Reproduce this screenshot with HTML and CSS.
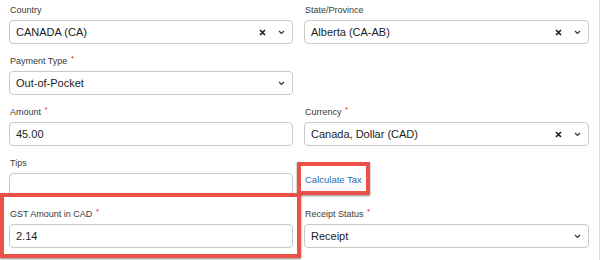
FILE: index.html
```html
<!DOCTYPE html>
<html lang="en">
<head>
    <meta charset="UTF-8">
    <meta name="viewport" content="width=device-width, initial-scale=1.0">
    <title>Expense Details</title>
    <link rel="stylesheet" href="styles.css">
</head>
<body>
    <div class="page">
        <form class="expense-form">
            <div class="field">
                <label class="field-label">Country</label>
                <div class="select">
                    <span class="select-value">CANADA (CA)</span>
                    <svg class="icon-clear" viewBox="0 0 7 7"><path d="M1 1L6 6M6 1L1 6"/></svg>
                    <svg class="icon-chevron" viewBox="0 0 7 5"><path d="M1 1L3.5 3.5L6 1"/></svg>
                </div>
            </div>
            <div class="field">
                <label class="field-label">State/Province</label>
                <div class="select">
                    <span class="select-value">Alberta (CA-AB)</span>
                    <svg class="icon-clear" viewBox="0 0 7 7"><path d="M1 1L6 6M6 1L1 6"/></svg>
                    <svg class="icon-chevron" viewBox="0 0 7 5"><path d="M1 1L3.5 3.5L6 1"/></svg>
                </div>
            </div>

            <div class="field">
                <label class="field-label">Payment Type <span class="required">*</span></label>
                <div class="select">
                    <span class="select-value">Out-of-Pocket</span>
                    <svg class="icon-chevron" viewBox="0 0 7 5"><path d="M1 1L3.5 3.5L6 1"/></svg>
                </div>
            </div>
            <div class="field"></div>

            <div class="field">
                <label class="field-label">Amount <span class="required">*</span></label>
                <div class="input">45.00</div>
            </div>
            <div class="field">
                <label class="field-label">Currency <span class="required">*</span></label>
                <div class="select">
                    <span class="select-value">Canada, Dollar (CAD)</span>
                    <svg class="icon-clear" viewBox="0 0 7 7"><path d="M1 1L6 6M6 1L1 6"/></svg>
                    <svg class="icon-chevron" viewBox="0 0 7 5"><path d="M1 1L3.5 3.5L6 1"/></svg>
                </div>
            </div>

            <div class="field">
                <label class="field-label">Tips</label>
                <div class="input"></div>
            </div>
            <div class="field">
                <span class="callout callout-link">
                    <a class="calc-link" href="#">Calculate Tax</a>
                </span>
            </div>

            <div class="field field-highlight">
                <label class="field-label">GST Amount in CAD <span class="required">*</span></label>
                <div class="input">2.14</div>
                <span class="callout callout-field"></span>
            </div>
            <div class="field">
                <label class="field-label">Receipt Status <span class="required">*</span></label>
                <div class="select">
                    <span class="select-value">Receipt</span>
                    <svg class="icon-chevron" viewBox="0 0 7 5"><path d="M1 1L3.5 3.5L6 1"/></svg>
                </div>
            </div>
        </form>
    </div>
</body>
</html>
```

FILE: styles.css
```css
:root {
    --label-color: #3a3a3a;
    --value-color: #1c1c1c;
    --border-color: #c9c9c9;
    --link-color: #2c6db3;
    --required-color: #d9261c;
    --callout-color: #ea5148;
}

body {
    margin: 0;
    font-family: 'Liberation Sans', Arial, sans-serif;
    background: #fff;
    color: var(--value-color);
}

.page {
    width: 600px;
    min-height: 100vh;
    border-right: 1px solid #dcdcdc;
    box-sizing: border-box;
    overflow: hidden;
}

.expense-form {
    display: grid;
    grid-template-columns: 284px 285px;
    grid-auto-rows: 41px;
    column-gap: 11px;
    row-gap: 10px;
    padding: 3px 0 0 9px;
}

.field {
    display: flex;
    flex-direction: column;
}

.field-highlight {
    position: relative;
}

.field-label {
    display: block;
    height: 15px;
    font-size: 9px;
    line-height: 15px;
    color: var(--label-color);
    margin-bottom: 2px;
    padding-left: 1px;
    white-space: nowrap;
}

.required {
    position: relative;
    top: -3px;
    color: var(--required-color);
    font-size: 8px;
    margin-left: 1px;
}

.select,
.input {
    height: 24px;
    box-sizing: border-box;
    border: 1px solid var(--border-color);
    border-radius: 4px;
    display: flex;
    align-items: center;
    padding: 0 0 0 6px;
    font-size: 11px;
    color: var(--value-color);
}

.select-value {
    flex: 1;
}

.icon-clear {
    width: 7px;
    height: 7px;
    fill: none;
    stroke: #222;
    stroke-width: 1.7;
    margin-right: 12px;
}

.icon-chevron {
    width: 7px;
    height: 5px;
    fill: none;
    stroke: #333;
    stroke-width: 1.2;
    margin-right: 7px;
}

.callout {
    border: 4px solid var(--callout-color);
    box-shadow: 0 1px 2px rgba(0, 0, 0, 0.45);
}

.callout-link {
    align-self: flex-start;
    margin: 6px 0 0 -7px;
    padding: 0 4px;
    height: 25px;
    display: flex;
    align-items: center;
}

.calc-link {
    font-size: 9.5px;
    color: var(--link-color);
    text-decoration: none;
    padding-top: 2px;
}

.callout-field {
    position: absolute;
    top: -14px;
    left: -9px;
    right: -8px;
    bottom: -10px;
}
```
